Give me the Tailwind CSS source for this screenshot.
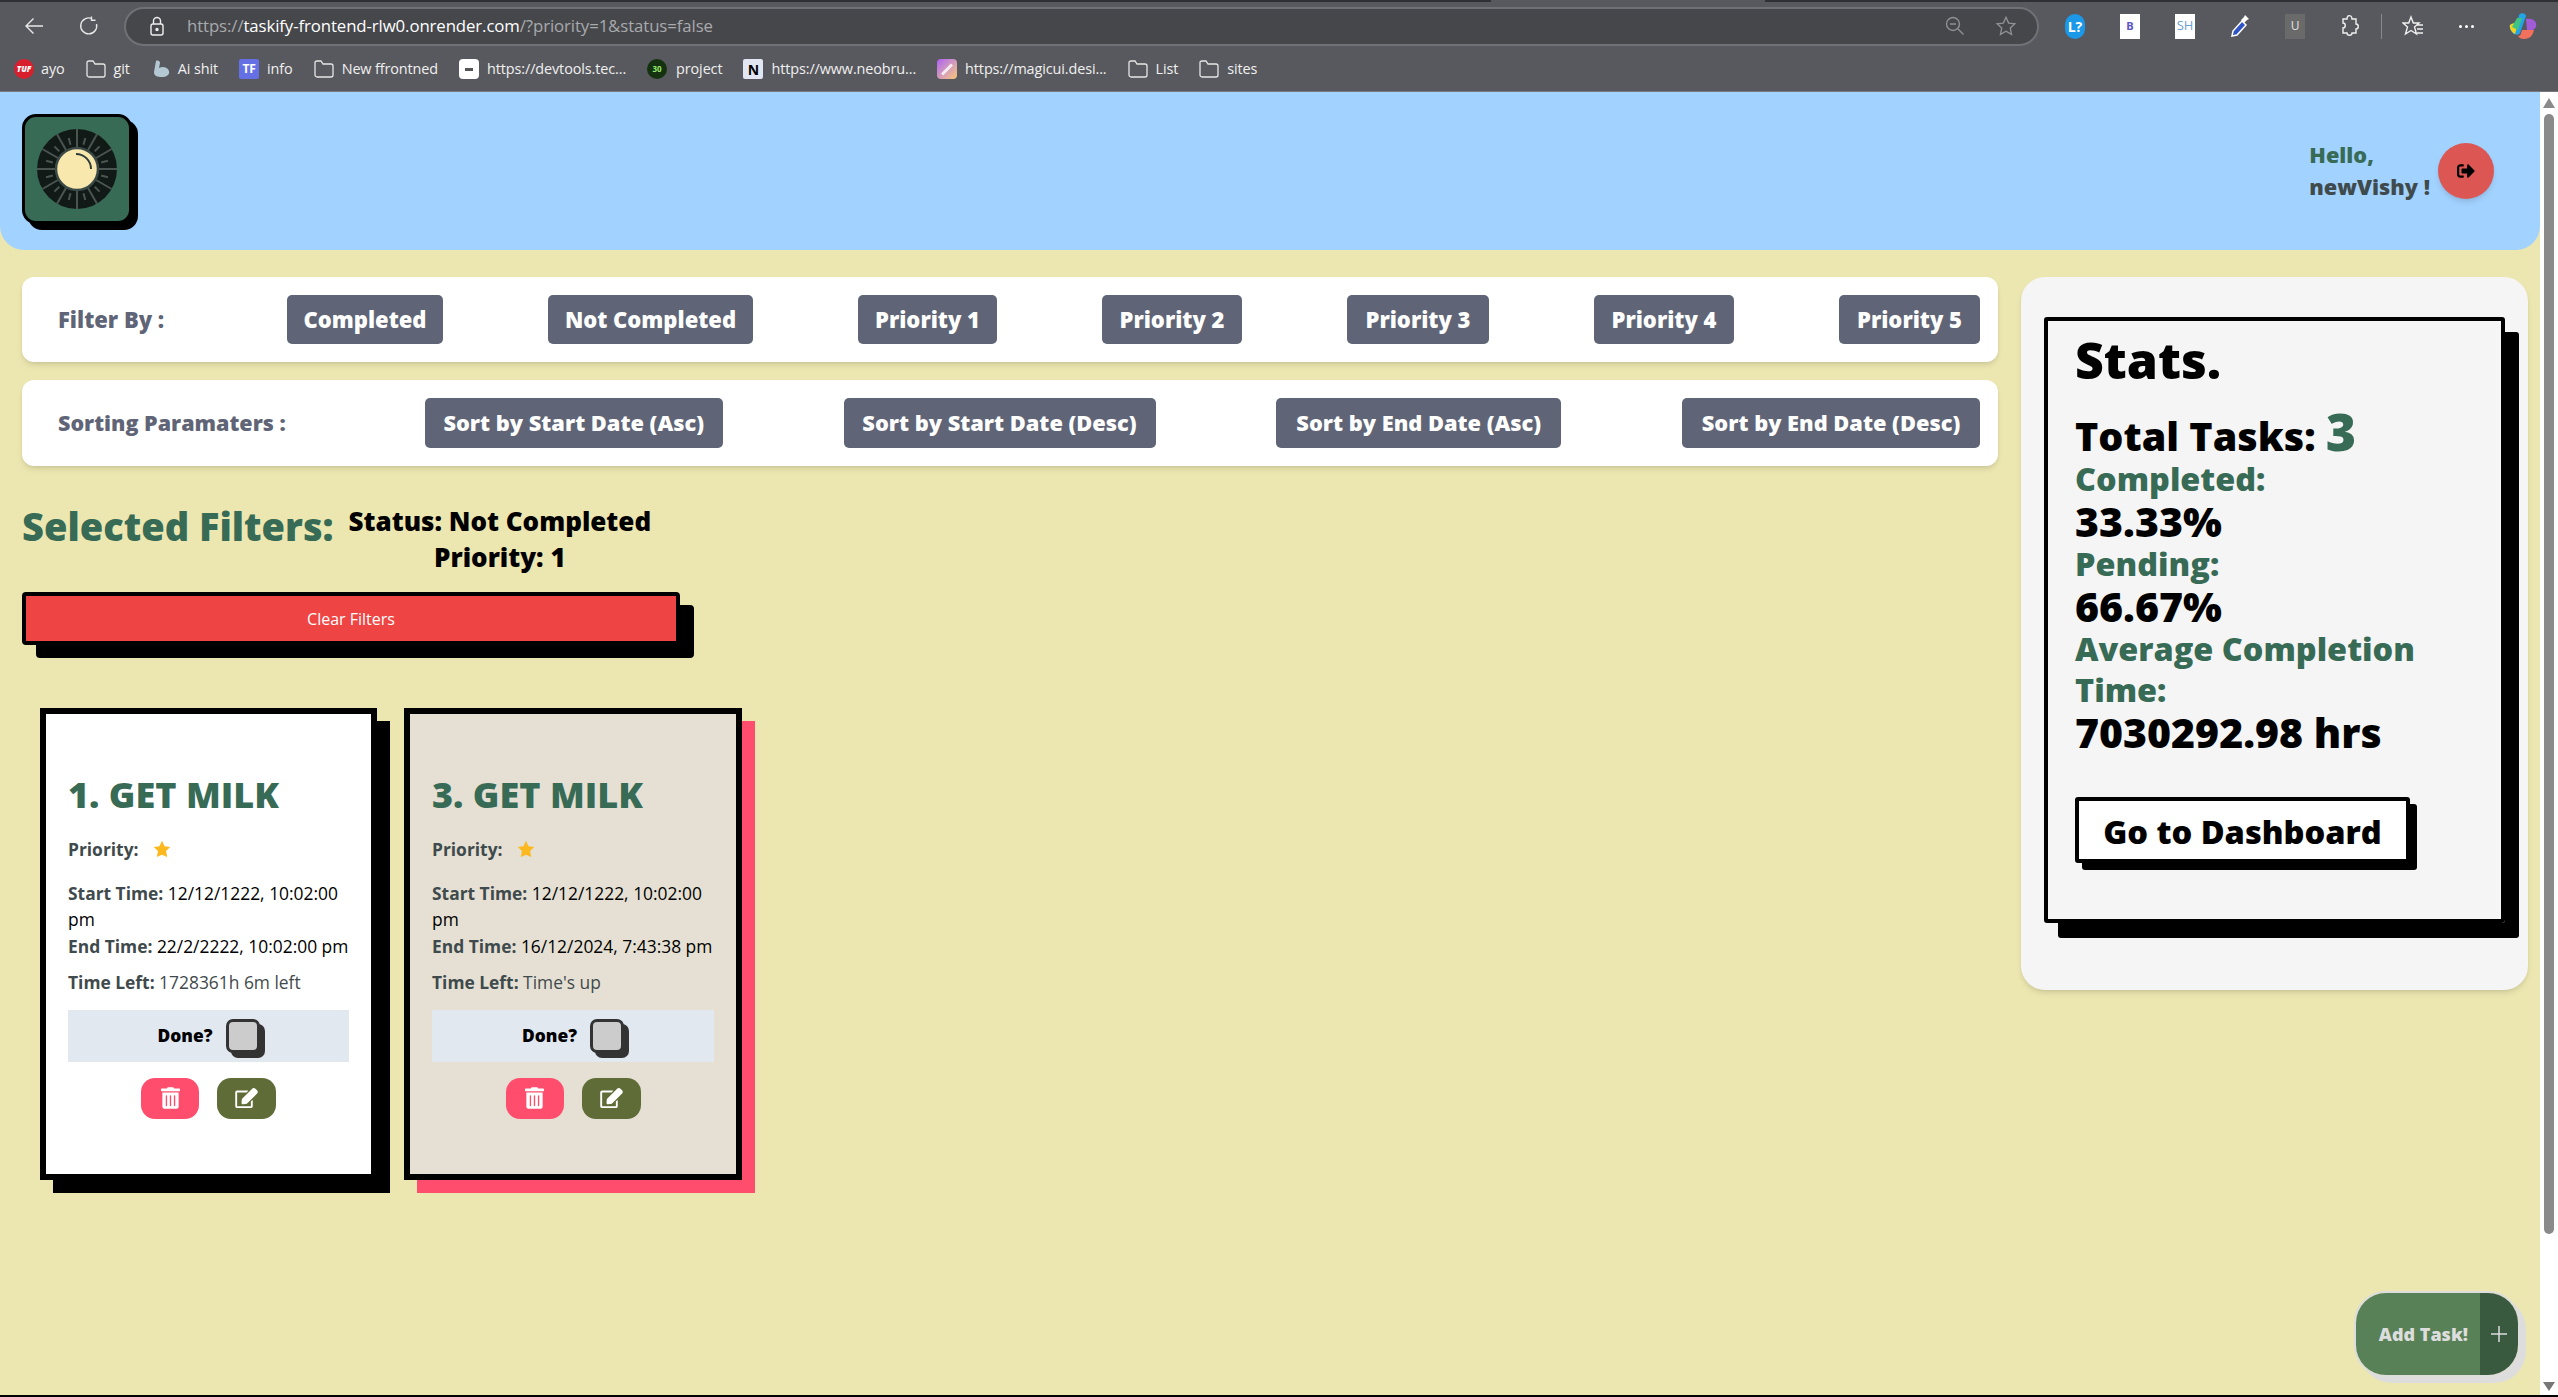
<!DOCTYPE html>
<html lang="en">
<head>
<meta charset="utf-8">
<title>Taskify</title>
<script src="https://cdn.jsdelivr.net/npm/@tailwindcss/browser@4"></script>
</head>
<body class="w-[2558px] h-[1397px] overflow-hidden bg-[#ece7b0] font-['Open_Sans',sans-serif]">

<!-- browser chrome -->
<div class="h-[92px] bg-[#58595e] border-b border-[#77787c] flex flex-col font-['Open_Sans',sans-serif] text-white">
  <div class="flex h-[2px] shrink-0">
    <div class="w-[1491px] bg-[#2f3034]"></div>
    <div class="w-[274px]"></div>
    <div class="flex-1 bg-[#2f3034]"></div>
  </div>
  <div class="h-[48px] flex items-center pl-[24px] shrink-0">
    <svg class="w-[20px] h-[20px] shrink-0" viewBox="0 0 20 20" fill="none" stroke="#e8e8e8" stroke-width="1.4"><path d="M19 10H2M9.500 2.500 2 10l7.500 7.500"/></svg>
    <svg class="w-[20px] h-[20px] ml-[35px] shrink-0" viewBox="0 0 20 20" fill="none" stroke="#e8e8e8" stroke-width="1.4"><path d="M17.500 8A8 8 0 1 1 13 2.600M12.500 0.500v3.700h4"/></svg>
    <div class="ml-[25px] w-[1915px] h-[39px] rounded-full bg-[#46474b] border-2 border-[#707176] flex items-center pl-[23px] pr-[20px]">
      <svg class="w-[16px] h-[20px] shrink-0" viewBox="0 0 16 20" fill="none" stroke="#eee" stroke-width="1.400"><rect x="2" y="8" width="12" height="11" rx="2"/><path d="M4.500 8V5a3.500 3.500 0 0 1 7 0v3"/><circle cx="8" cy="13.500" r="1" fill="#eee"/></svg>
      <span class="ml-[22px] text-[16.800px] tracking-[-0.1px] text-[#a9aaad] whitespace-nowrap">https://<span class="text-white">taskify-frontend-rlw0.onrender.com</span>/?priority=1&amp;status=false</span>
      <svg class="w-[20px] h-[20px] ml-auto shrink-0" viewBox="0 0 20 20" fill="none" stroke="#8f9094" stroke-width="1.400"><circle cx="8" cy="8" r="6.500"/><path d="M13 13l5.500 5.500M5 8h6"/></svg>
      <svg class="w-[22px] h-[22px] ml-[30px] shrink-0" viewBox="0 0 24 24" fill="none" stroke="#8f9094" stroke-width="1.500"><path d="M12 2.500l2.900 6.300 6.800.8-5 4.700 1.300 6.800-6-3.400-6 3.400 1.300-6.800-5-4.700 6.800-.8z"/></svg>
    </div>
    <div class="ml-[26px] flex items-center gap-[35px]">
      <div class="w-[20px] h-[25px] rounded-full bg-[#1b98e8] flex items-center justify-center text-[14px] font-bold">L?</div>
      <div class="w-[20px] h-[25px] bg-white flex items-center justify-center text-[11px] font-bold text-[#5a54c4]">B</div>
      <div class="w-[20px] h-[25px] bg-white flex items-center justify-center text-[13px] text-[#6b9fd4]">SH</div>
      <svg class="w-[20px] h-[25px]" viewBox="0 0 20 25"><path d="M2 22l1-5L12 7l4 4-9 10z" fill="#2e53c4" stroke="#fff" stroke-width="1.500"/><path d="M11 6l3-3 1-2 4 4-2 1-3 3z" fill="#fff"/></svg>
      <div class="w-[20px] h-[25px] bg-[#6a6a6a] flex items-center justify-center text-[12px] text-[#e2e2e2]">U</div>
      <svg class="w-[20px] h-[24px]" viewBox="0 0 20 24" fill="none" stroke="#f0f0f0" stroke-width="1.400"><path d="M8 2c2-1 4 0 4 3h4v5c3 0 3 5 0 5v4h-4c0 3-5 3-5 0H3v-5c3 0 3-5 0-5V5h4c0-1 0-2 1-3z"/></svg>
    </div>
    <div class="ml-[21px] w-[1px] h-[25px] bg-[#88898d]"></div>
    <svg class="ml-[20px] w-[22px] h-[24px]" viewBox="0 0 22 24" fill="none" stroke="#f0f0f0" stroke-width="1.400"><path d="M9 3l2.300 6H17l-4.500 4 2 7L9 16.500 3.500 20l2-7L1 9h5.700zM15 11h6M15 15h6M15 19h6"/></svg>
    <div class="ml-[32px] w-[20px] flex justify-center gap-[3px]">
      <span class="w-[3px] h-[3px] rounded-full bg-white"></span><span class="w-[3px] h-[3px] rounded-full bg-white"></span><span class="w-[3px] h-[3px] rounded-full bg-white"></span>
    </div>
    <svg class="ml-[33px] w-[28px] h-[28px]" viewBox="0 0 28 28">
      <path d="M10 3c2-3 7-2 7 1L11 21c-1 2-4 2-6 1-3-2-5-7-4-9 1-1 8-1 9-10z" fill="#22a4e8"/>
      <path d="M1 13c2-2 6-2 8-1l-3 10c-3-1-6-6-5-9z" fill="#f2d21f"/>
      <path d="M17 7c3-1 9 0 10 4 1 3-1 7-4 7h-5z" fill="#a25cd8"/>
      <path d="M13 18h12c-1 5-4 9-10 9-3 0-5-1-6-3 3 0 3-3 4-6z" fill="#f2715c"/>
      <path d="M8 6l5 0-4 12-6-3z" fill="#3fc383"/>
    </svg>
  </div>
  <div class="flex items-center gap-[21px] pl-[14px] mt-[9px] h-[20px] text-[14.400px] tracking-[-0.1px] text-[#f0f0f0]">
    <div class="flex items-center gap-[7px]">
      <div class="w-[20px] h-[20px] rounded-full bg-[#d81f2e] flex items-center justify-center text-[8px] font-extrabold italic text-white">TUF</div><span>ayo</span>
    </div>
    <div class="flex items-center gap-[8px]">
      <svg class="w-[20px] h-[20px]" viewBox="0 0 20 20" fill="none" stroke="#e6e6e6" stroke-width="1.300"><path d="M1 16V3.500C1 2.500 2 2 3 2h4l2 3h8c1 0 2 1 2 2v9c0 1-1 2-2 2H3c-1 0-2-1-2-2z"/></svg><span>git</span>
    </div>
    <div class="flex items-center gap-[7px]">
      <svg class="w-[20px] h-[20px]" viewBox="0 0 20 20"><path d="M5 2c2-1 4 0 4 2L8 9c3-2 9-1 10 3 1 4-3 6-7 6-5 0-8-1-8-5z" fill="#b3c8d2"/></svg><span>Ai shit</span>
    </div>
    <div class="flex items-center gap-[8px]">
      <div class="w-[20px] h-[20px] rounded-[2px] bg-[#6470e4] flex items-center justify-center text-[12px] font-bold text-white">TF</div><span>info</span>
    </div>
    <div class="flex items-center gap-[8px]">
      <svg class="w-[20px] h-[20px]" viewBox="0 0 20 20" fill="none" stroke="#e6e6e6" stroke-width="1.300"><path d="M1 16V3.500C1 2.500 2 2 3 2h4l2 3h8c1 0 2 1 2 2v9c0 1-1 2-2 2H3c-1 0-2-1-2-2z"/></svg><span>New ffrontned</span>
    </div>
    <div class="flex items-center gap-[8px]">
      <div class="w-[20px] h-[20px] rounded-[4px] bg-white flex items-center justify-center"><span class="w-[8px] h-[3px] bg-[#555]"></span></div><span>https://devtools.tec...</span>
    </div>
    <div class="flex items-center gap-[9px]">
      <div class="w-[20px] h-[20px] rounded-full bg-[#14320f] flex items-center justify-center text-[8px] font-bold text-[#9ae66e]">30</div><span>project</span>
    </div>
    <div class="flex items-center gap-[8px]">
      <div class="w-[20px] h-[20px] rounded-[2px] bg-[#e2e6f2] flex items-center justify-center text-[14px] font-bold text-black">N</div><span>https://www.neobru...</span>
    </div>
    <div class="flex items-center gap-[8px]">
      <div class="w-[20px] h-[20px] rounded-[4px] bg-linear-to-br from-[#b05cf0] to-[#fbc66c] flex items-center justify-center"><span class="w-[14px] h-[3px] bg-white/80 -rotate-45"></span></div><span>https://magicui.desi...</span>
    </div>
    <div class="flex items-center gap-[8px]">
      <svg class="w-[20px] h-[20px]" viewBox="0 0 20 20" fill="none" stroke="#e6e6e6" stroke-width="1.300"><path d="M1 16V3.500C1 2.500 2 2 3 2h4l2 3h8c1 0 2 1 2 2v9c0 1-1 2-2 2H3c-1 0-2-1-2-2z"/></svg><span>List</span>
    </div>
    <div class="flex items-center gap-[8px]">
      <svg class="w-[20px] h-[20px]" viewBox="0 0 20 20" fill="none" stroke="#e6e6e6" stroke-width="1.300"><path d="M1 16V3.500C1 2.500 2 2 3 2h4l2 3h8c1 0 2 1 2 2v9c0 1-1 2-2 2H3c-1 0-2-1-2-2z"/></svg><span>sites</span>
    </div>
  </div>
</div>

<div class="flex h-[1305px]">
  <!-- page -->
  <div class="w-[2540px] h-[1303px] relative">
    <header class="h-[158px] bg-[#a2d2ff] rounded-b-[24px] flex items-center justify-between pl-[22px] pr-[46px]">
      <div class="w-[110px] h-[110px] border-[3px] border-black rounded-[14px] bg-[#386b56] shadow-[6px_6px_0_#000] flex items-center justify-center mb-[4px]">
        <svg class="w-[80px] h-[80px]" viewBox="0 0 80 80">
          <circle cx="40" cy="40" r="40" fill="#111a17"/>
          <g stroke="#4a5551" stroke-width="2">
            <line x1="40" y1="0" x2="40" y2="18"/>
            <line x1="40" y1="0" x2="40" y2="18" transform="rotate(30 40 40)"/>
            <line x1="40" y1="0" x2="40" y2="18" transform="rotate(60 40 40)"/>
            <line x1="40" y1="0" x2="40" y2="18" transform="rotate(90 40 40)"/>
            <line x1="40" y1="0" x2="40" y2="18" transform="rotate(120 40 40)"/>
            <line x1="40" y1="0" x2="40" y2="18" transform="rotate(150 40 40)"/>
            <line x1="40" y1="0" x2="40" y2="18" transform="rotate(180 40 40)"/>
            <line x1="40" y1="0" x2="40" y2="18" transform="rotate(210 40 40)"/>
            <line x1="40" y1="0" x2="40" y2="18" transform="rotate(240 40 40)"/>
            <line x1="40" y1="0" x2="40" y2="18" transform="rotate(270 40 40)"/>
            <line x1="40" y1="0" x2="40" y2="18" transform="rotate(300 40 40)"/>
            <line x1="40" y1="0" x2="40" y2="18" transform="rotate(330 40 40)"/>
            <line x1="40" y1="8" x2="40" y2="15" transform="rotate(15 40 40)"/>
            <line x1="40" y1="8" x2="40" y2="15" transform="rotate(45 40 40)"/>
            <line x1="40" y1="8" x2="40" y2="15" transform="rotate(75 40 40)"/>
            <line x1="40" y1="8" x2="40" y2="15" transform="rotate(105 40 40)"/>
            <line x1="40" y1="8" x2="40" y2="15" transform="rotate(135 40 40)"/>
            <line x1="40" y1="8" x2="40" y2="15" transform="rotate(165 40 40)"/>
            <line x1="40" y1="8" x2="40" y2="15" transform="rotate(195 40 40)"/>
            <line x1="40" y1="8" x2="40" y2="15" transform="rotate(225 40 40)"/>
            <line x1="40" y1="8" x2="40" y2="15" transform="rotate(255 40 40)"/>
            <line x1="40" y1="8" x2="40" y2="15" transform="rotate(285 40 40)"/>
            <line x1="40" y1="8" x2="40" y2="15" transform="rotate(315 40 40)"/>
            <line x1="40" y1="8" x2="40" y2="15" transform="rotate(345 40 40)"/>
          </g>
          <circle cx="40" cy="40" r="21" fill="#f9e8ae" stroke="#3b4a46" stroke-width="2.500"/>
          <path d="M39 25a15 15 0 0 1 15 15" fill="none" stroke="#2f3d39" stroke-width="2"/>
        </svg>
      </div>
      <div class="flex items-center gap-[8px]">
        <div class="text-[21.700px] leading-[32px] font-extrabold text-[#3f4a4c]">
          <div class="text-[#386b56]">Hello,</div>
          <div>newVishy !</div>
        </div>
        <button class="w-[56px] h-[56px] rounded-full bg-[#dc5753] shadow-md flex items-center justify-center">
          <svg class="w-[18px] h-[18px]" viewBox="0 0 512 512"><path d="M497 273L329 441c-15 15-41 4.500-41-17v-96H152c-13.300 0-24-10.700-24-24v-96c0-13.300 10.700-24 24-24h136V88c0-21.400 25.900-32 41-17l168 168c9.300 9.400 9.300 24.600 0 34zM192 436v-40c0-6.600-5.400-12-12-12H96c-17.700 0-32-14.300-32-32V160c0-17.700 14.300-32 32-32h84c6.600 0 12-5.400 12-12V76c0-6.600-5.400-12-12-12H96c-53 0-96 43-96 96v192c0 53 43 96 96 96h84c6.600 0 12-5.400 12-12z"/></svg>
        </button>
      </div>
    </header>

    <div class="flex items-start pl-[22px] pt-[27px] gap-[23px]">
      <main class="w-[1976px]">
        <section class="h-[85px] bg-white rounded-[12px] shadow-md px-[18px] flex items-center justify-between text-[22px] font-extrabold">
          <span class="px-[18px] text-[#5f6577] w-[142px] whitespace-nowrap">Filter By :</span>
          <button class="h-[49px] w-[156px] rounded-[5px] bg-[#5f6577] text-white">Completed</button>
          <button class="h-[49px] w-[205px] rounded-[5px] bg-[#5f6577] text-white">Not Completed</button>
          <button class="h-[49px] w-[139px] rounded-[5px] bg-[#5f6577] text-white">Priority 1</button>
          <button class="h-[49px] w-[140px] rounded-[5px] bg-[#5f6577] text-white">Priority 2</button>
          <button class="h-[49px] w-[142px] rounded-[5px] bg-[#5f6577] text-white">Priority 3</button>
          <button class="h-[49px] w-[140px] rounded-[5px] bg-[#5f6577] text-white">Priority 4</button>
          <button class="h-[49px] w-[141px] rounded-[5px] bg-[#5f6577] text-white">Priority 5</button>
        </section>
        <section class="h-[86px] mt-[18px] bg-white rounded-[12px] shadow-md px-[18px] flex items-center justify-between text-[21.800px] font-extrabold">
          <span class="px-[18px] text-[21.500px] text-[#5f6577] w-[264px] whitespace-nowrap">Sorting Paramaters :</span>
          <button class="h-[50px] w-[298px] rounded-[5px] bg-[#5f6577] text-white">Sort by Start Date (Asc)</button>
          <button class="h-[50px] w-[312px] rounded-[5px] bg-[#5f6577] text-white">Sort by Start Date (Desc)</button>
          <button class="h-[50px] w-[285px] rounded-[5px] bg-[#5f6577] text-white">Sort by End Date (Asc)</button>
          <button class="h-[50px] w-[298px] rounded-[5px] bg-[#5f6577] text-white">Sort by End Date (Desc)</button>
        </section>

        <div class="flex items-start mt-[37px]">
          <h2 class="text-[38px] leading-[46px] font-extrabold text-[#386b56] whitespace-nowrap">Selected Filters:</h2>
          <div class="ml-[15px] text-[26px] leading-[36px] font-extrabold text-black text-center">
            <div>Status: Not Completed</div>
            <div>Priority: 1</div>
          </div>
        </div>

        <button class="block mt-[17px] w-[658px] h-[53px] bg-[#ef4444] border-[4px] border-black rounded-[4px] shadow-[14px_13px_0_#000] text-white text-[16px]">Clear Filters</button>

        <div class="flex gap-[27px] mt-[63px] ml-[18px]">
          <!-- card 1 -->
          <article class="w-[337px] h-[472px] bg-white border-[6px] border-black shadow-[13px_13px_0_#000] pl-[22px] pr-[22px] pt-[56px] text-[17.400px] leading-[26.500px] text-[#3f4a4c]">
            <h3 class="text-[36px] leading-[50px] font-extrabold text-[#386b56] whitespace-nowrap">1. GET MILK</h3>
            <p class="mt-[16px] flex items-center gap-[14px] font-bold">Priority:
              <svg class="w-[18px] h-[18px]" viewBox="0 0 24 24" fill="#fbb81f"><path d="M12 1l3.400 7.200 7.600 1-5.600 5.400 1.500 8L12 19.700 5.100 22.600l1.500-8L1 9.200l7.600-1z"/></svg>
            </p>
            <p class="mt-[17px] text-black"><b class="font-bold text-[#3f4a4c]">Start Time:</b> 12/12/1222, 10:02:00 pm<br><span class="whitespace-nowrap"><b class="font-bold text-[#3f4a4c]">End Time:</b> 22/2/2222, 10:02:00 pm</span></p>
            <p class="mt-[10px]"><b class="font-bold">Time Left:</b> 1728361h 6m left</p>
            <div class="mt-[14px] h-[52px] bg-[#e2e8f0] flex items-center justify-center gap-[13px] font-extrabold text-black">Done?
              <span class="w-[34px] h-[34px] rounded-[7px] bg-[#ccc] border-[3px] border-[#333] shadow-[5px_5px_0_#333]"></span>
            </div>
            <div class="mt-[16px] flex justify-center gap-[18px]">
              <button class="w-[58px] h-[41px] rounded-[14px] bg-[#ff4d6d] flex items-center justify-center">
                <svg class="w-[19px] h-[22px]" viewBox="0 0 448 512" fill="#fff"><path d="M32 464a48 48 0 0 0 48 48h288a48 48 0 0 0 48-48V128H32zm272-256a16 16 0 0 1 32 0v224a16 16 0 0 1-32 0zm-96 0a16 16 0 0 1 32 0v224a16 16 0 0 1-32 0zm-96 0a16 16 0 0 1 32 0v224a16 16 0 0 1-32 0zM432 32H312l-9.400-18.700A24 24 0 0 0 281.100 0H166.800a23.720 23.720 0 0 0-21.400 13.300L136 32H16A16 16 0 0 0 0 48v32a16 16 0 0 0 16 16h416a16 16 0 0 0 16-16V48a16 16 0 0 0-16-16z"/></svg>
              </button>
              <button class="w-[59px] h-[41px] rounded-[14px] bg-[#606c38] flex items-center justify-center">
                <svg class="w-[23px] h-[20px]" viewBox="0 0 576 512" fill="#fff"><path d="M402.300 344.900l32-32c5-5 13.700-1.500 13.700 5.700V464c0 26.500-21.500 48-48 48H48c-26.500 0-48-21.500-48-48V112c0-26.500 21.500-48 48-48h273.500c7.100 0 10.700 8.600 5.700 13.700l-32 32c-1.500 1.500-3.500 2.300-5.700 2.300H48v352h352V350.500c0-2.100.8-4.100 2.300-5.600zm156.600-201.800L296.300 405.700l-90.400 10c-26.200 2.900-48.500-19.200-45.600-45.600l10-90.400L432.900 17.100c22.900-22.900 59.900-22.900 82.700 0l43.200 43.200c22.900 22.900 22.900 60 .1 82.800z"/></svg>
              </button>
            </div>
          </article>
          <!-- card 2 -->
          <article class="w-[338px] h-[472px] bg-[#e5e0d3] border-[6px] border-black shadow-[13px_13px_0_#ff4d6d] pl-[22px] pr-[22px] pt-[56px] text-[17.400px] leading-[26.500px] text-[#3f4a4c]">
            <h3 class="text-[36px] leading-[50px] font-extrabold text-[#386b56] whitespace-nowrap">3. GET MILK</h3>
            <p class="mt-[16px] flex items-center gap-[14px] font-bold">Priority:
              <svg class="w-[18px] h-[18px]" viewBox="0 0 24 24" fill="#fbb81f"><path d="M12 1l3.400 7.200 7.600 1-5.600 5.400 1.500 8L12 19.700 5.100 22.600l1.500-8L1 9.200l7.600-1z"/></svg>
            </p>
            <p class="mt-[17px] text-black"><b class="font-bold text-[#3f4a4c]">Start Time:</b> 12/12/1222, 10:02:00 pm<br><span class="whitespace-nowrap"><b class="font-bold text-[#3f4a4c]">End Time:</b> 16/12/2024, 7:43:38 pm</span></p>
            <p class="mt-[10px]"><b class="font-bold">Time Left:</b> Time's up</p>
            <div class="mt-[14px] h-[52px] bg-[#e2e8f0] flex items-center justify-center gap-[13px] font-extrabold text-black">Done?
              <span class="w-[34px] h-[34px] rounded-[7px] bg-[#ccc] border-[3px] border-[#333] shadow-[5px_5px_0_#333]"></span>
            </div>
            <div class="mt-[16px] flex justify-center gap-[18px]">
              <button class="w-[58px] h-[41px] rounded-[14px] bg-[#ff4d6d] flex items-center justify-center">
                <svg class="w-[19px] h-[22px]" viewBox="0 0 448 512" fill="#fff"><path d="M32 464a48 48 0 0 0 48 48h288a48 48 0 0 0 48-48V128H32zm272-256a16 16 0 0 1 32 0v224a16 16 0 0 1-32 0zm-96 0a16 16 0 0 1 32 0v224a16 16 0 0 1-32 0zm-96 0a16 16 0 0 1 32 0v224a16 16 0 0 1-32 0zM432 32H312l-9.400-18.700A24 24 0 0 0 281.100 0H166.800a23.720 23.720 0 0 0-21.400 13.300L136 32H16A16 16 0 0 0 0 48v32a16 16 0 0 0 16 16h416a16 16 0 0 0 16-16V48a16 16 0 0 0-16-16z"/></svg>
              </button>
              <button class="w-[59px] h-[41px] rounded-[14px] bg-[#606c38] flex items-center justify-center">
                <svg class="w-[23px] h-[20px]" viewBox="0 0 576 512" fill="#fff"><path d="M402.300 344.900l32-32c5-5 13.700-1.500 13.700 5.700V464c0 26.500-21.500 48-48 48H48c-26.500 0-48-21.500-48-48V112c0-26.500 21.500-48 48-48h273.500c7.100 0 10.700 8.600 5.700 13.700l-32 32c-1.500 1.500-3.500 2.300-5.700 2.300H48v352h352V350.500c0-2.100.8-4.100 2.300-5.600zm156.600-201.800L296.300 405.700l-90.400 10c-26.200 2.900-48.500-19.200-45.600-45.600l10-90.400L432.900 17.100c22.900-22.900 59.900-22.900 82.700 0l43.200 43.200c22.900 22.900 22.900 60 .1 82.800z"/></svg>
              </button>
            </div>
          </article>
        </div>
      </main>

      <aside class="w-[507px] h-[713px] bg-[#f5f5f5] rounded-[24px] shadow-md pt-[40px] pl-[23px]">
        <div class="w-[461px] h-[606px] border-[4px] border-black rounded-[3px] shadow-[14px_15px_0_#000] pl-[27px] pt-[4px] text-black font-extrabold">
          <h2 class="text-[50px] leading-[70px]">Stats.</h2>
          <p class="mt-[14px] text-[39.500px] leading-[54px] whitespace-nowrap">Total Tasks: <span class="text-[52px] leading-[40px] text-[#386b56]">3</span></p>
          <p class="text-[32.400px] leading-[41px] text-[#386b56] -mt-[5px]">Completed:</p>
          <p class="text-[41px] leading-[44px]">33.33%</p>
          <p class="text-[32.400px] leading-[41px] text-[#386b56]">Pending:</p>
          <p class="text-[41px] leading-[44px]">66.67%</p>
          <p class="text-[32.400px] leading-[41px] text-[#386b56]">Average Completion<br>Time:</p>
          <p class="text-[41px] leading-[44px]">7030292.98 hrs</p>
          <button class="block mt-[43px] w-[335px] h-[66px] pt-[4px] bg-white border-[4px] border-black rounded-[3px] shadow-[7px_7px_0_#000] text-[32.600px]">Go to Dashboard</button>
        </div>
      </aside>
    </div>

    <button class="absolute left-[2354px] top-[1199px] w-[166px] h-[86px] rounded-[32px] border-2 border-[#ddd] shadow-[6px_6px_0_#ddd] overflow-hidden flex text-[#ddd]">
      <span class="w-[124px] h-full bg-[#588157] flex items-center justify-end pr-[12px] text-[18px] font-extrabold whitespace-nowrap">Add Task!</span>
      <span class="flex-1 h-full bg-[#3a5a40] flex items-center justify-center">
        <svg class="w-[16px] h-[16px]" viewBox="0 0 16 16" stroke="#ddd" stroke-width="1.500"><path d="M8 0v16M0 8h16"/></svg>
      </span>
    </button>
  </div>

  <!-- scrollbar -->
  <div class="w-[18px] h-[1303px] bg-white flex flex-col items-center">
    <div class="mt-[6px] w-0 h-0 border-x-[6px] border-x-transparent border-b-[10px] border-b-[#8a8a8a]"></div>
    <div class="mt-[6px] w-[10px] h-[1120px] rounded-full bg-[#8a8a8a]"></div>
    <div class="mt-auto mb-[4px] w-0 h-0 border-x-[6px] border-x-transparent border-t-[9px] border-t-[#777]"></div>
  </div>
</div>
<div class="h-[2px] bg-black -mt-[2px] relative"></div>
</body>
</html>
